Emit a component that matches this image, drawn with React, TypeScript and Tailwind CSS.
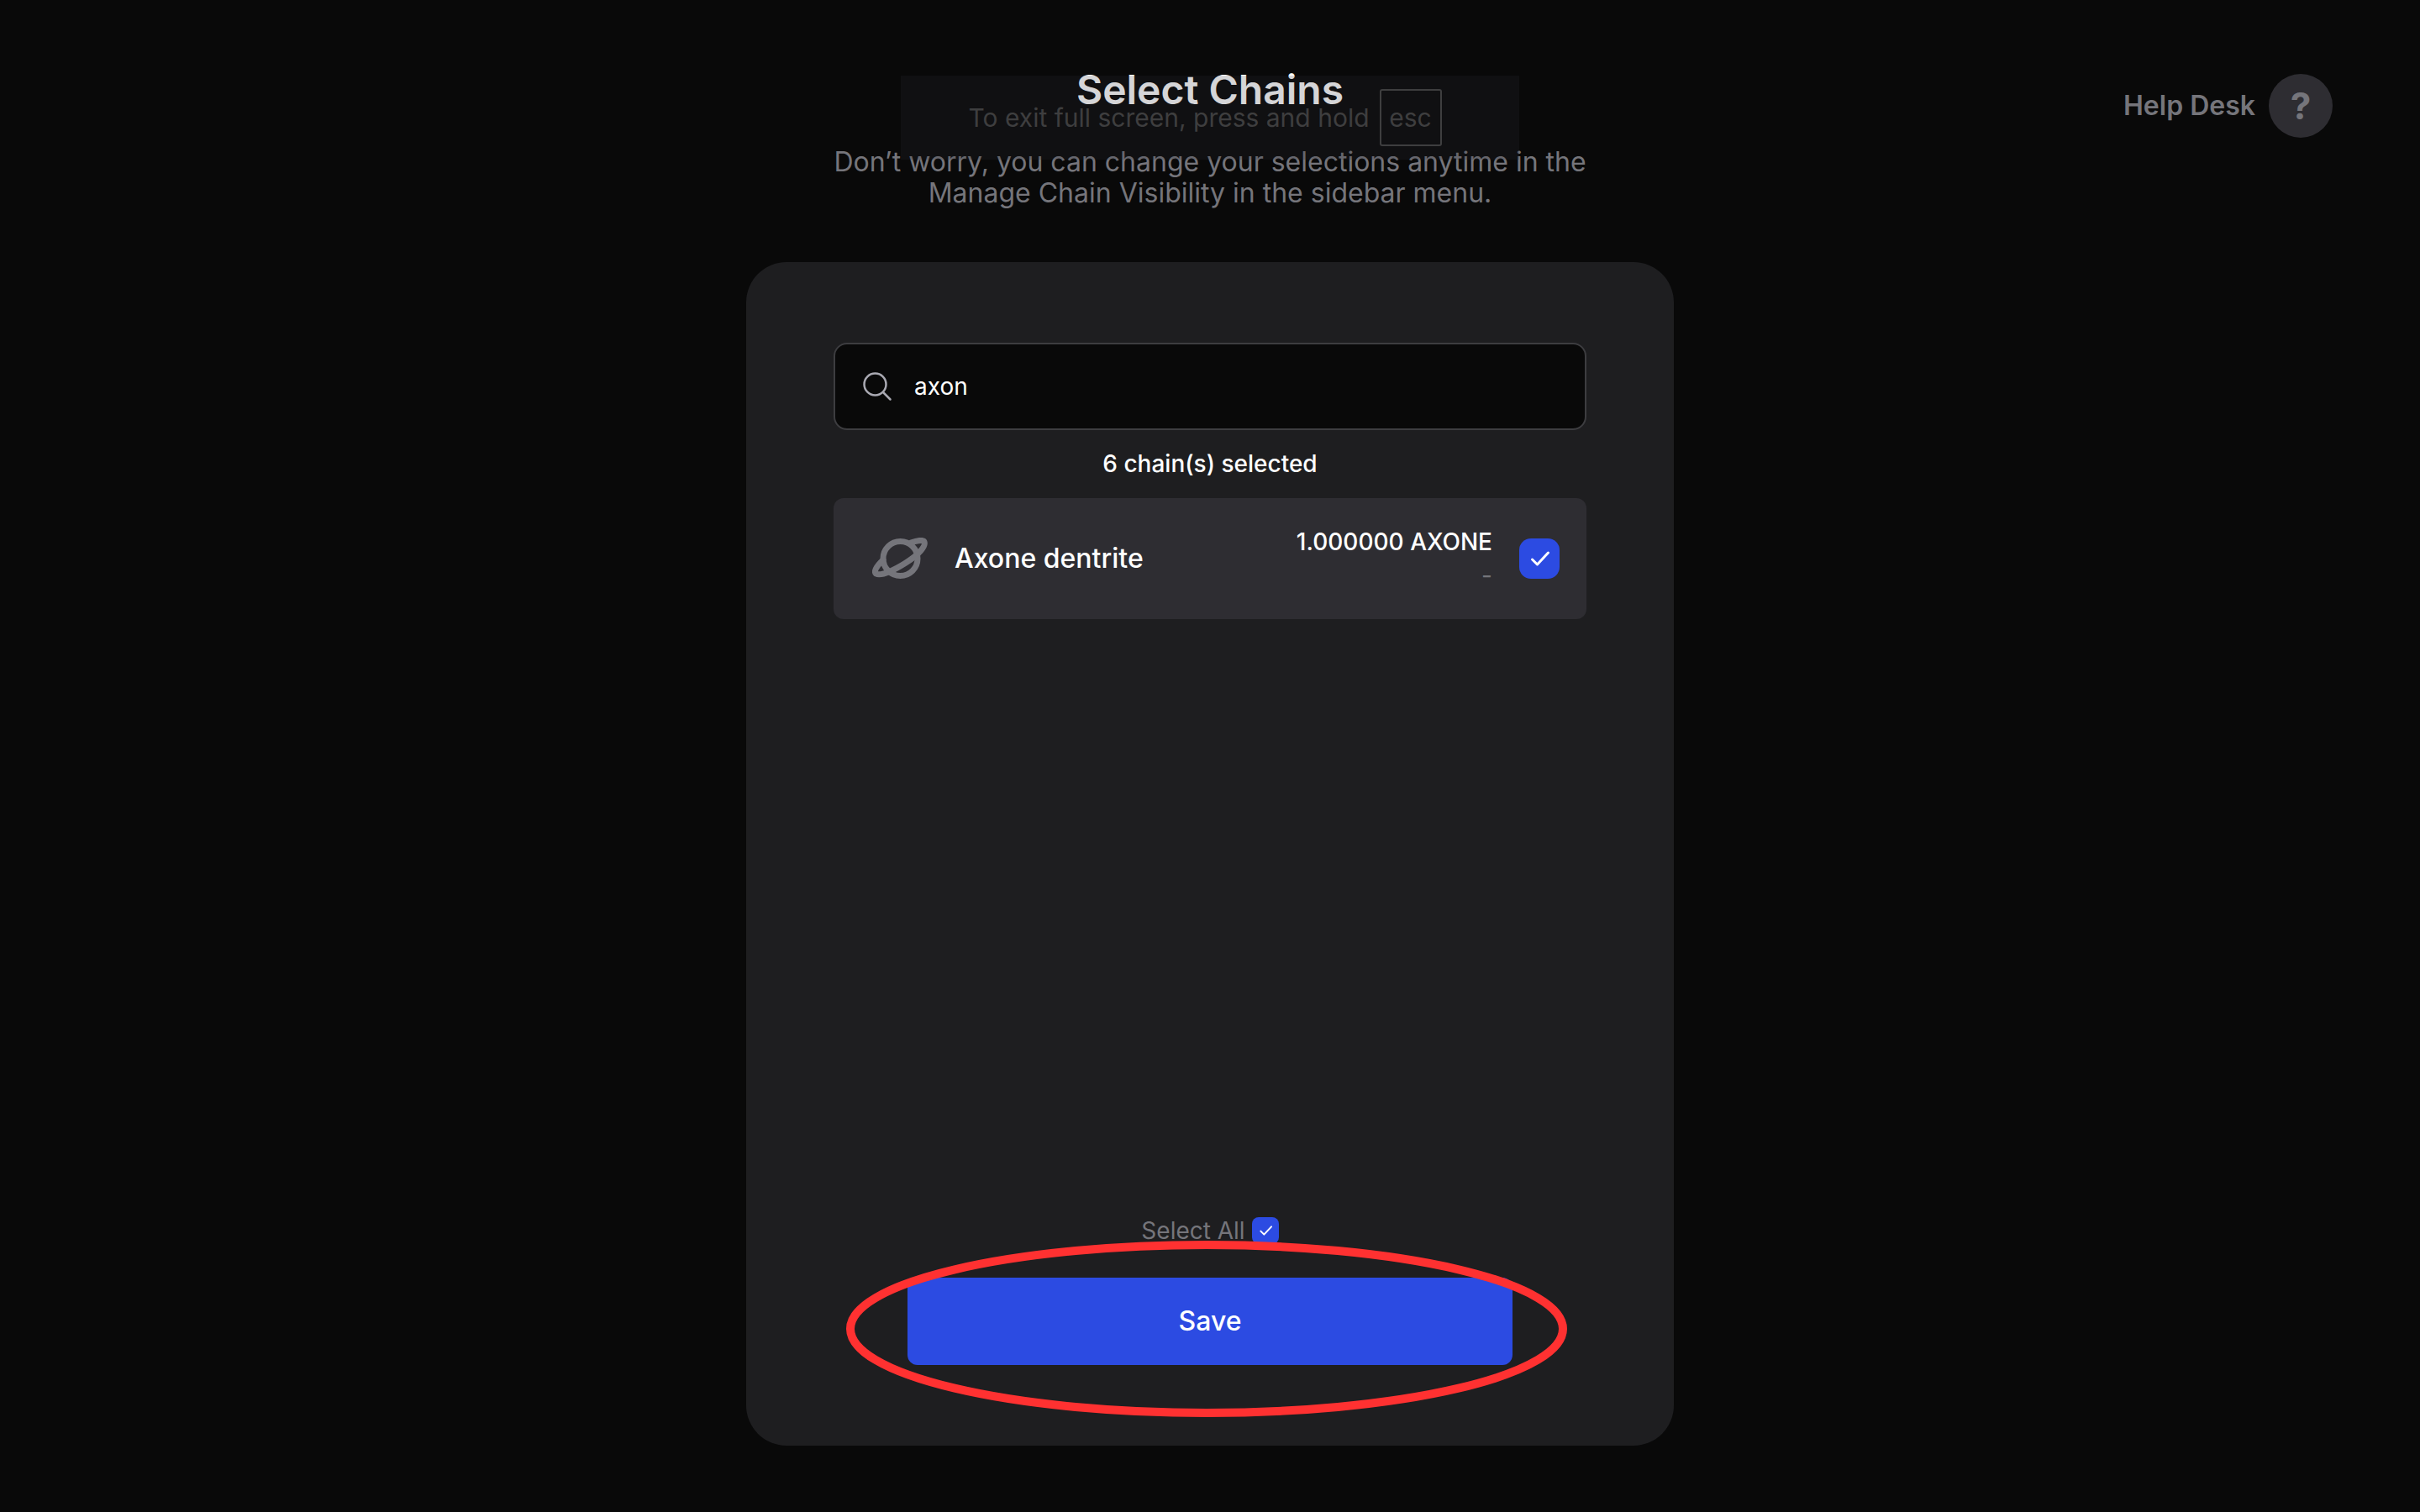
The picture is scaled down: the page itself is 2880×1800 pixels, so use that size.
import React, { useState } from "react";

function Check({ className }: { className: string }) {
  return (
    <svg viewBox="0 0 48 48" fill="none" aria-hidden="true" className={className}>
      <path d="M15.5 25L21.5 31L34.5 17" stroke="#ffffff" strokeWidth="3" strokeLinecap="round" strokeLinejoin="round" />
    </svg>
  );
}

function Planet() {
  return (
    <svg viewBox="0 0 66 50" fill="none" aria-hidden="true" className="h-[50px] w-[66px] shrink-0">
      <g stroke="#75757b" strokeWidth="7" strokeLinejoin="round" strokeLinecap="round">
        <circle cx="33.5" cy="25" r="20.5" />
        <path d="M46 6C56 2.5 61 3 62 5C64 10 56 20 40 30C25 39.5 10 46 4.5 43C1.5 40.5 5 34 13 26.5" />
      </g>
    </svg>
  );
}

export default function App() {
  const [query, setQuery] = useState("axon");
  const [chain, setChain] = useState(true);
  const [all, setAll] = useState(true);

  return (
    <div className="relative flex min-h-screen flex-col items-center bg-[#090909] pb-20 font-['Inter',sans-serif] text-white">
      <a href="#help" className="absolute top-[88px] right-[104px] flex items-center gap-4 text-[32px] font-semibold text-[#75757b]">
        Help Desk
        <span className="flex size-[76px] items-center justify-center rounded-full bg-[#2e2d32] text-[44px] font-bold">?</span>
      </a>

      <header className="flex flex-col items-center pt-20 text-center">
        <h1 className="text-[48px] leading-[54px] font-semibold">Select Chains</h1>
        <p className="mt-10 w-[920px] max-w-full text-[32px] leading-[37px] text-[#75757b]">
          Don’t worry, you can change your selections anytime in the Manage Chain Visibility in the sidebar menu.
        </p>
      </header>

      <div className="absolute top-[90px] left-1/2 flex h-[100px] w-[736px] -translate-x-1/2 items-center justify-center gap-3 bg-[#2d2d3633] pr-3 text-[30px] text-[#3e3e3f]">
        <span>To exit full screen, press and hold</span>
        <kbd className="flex h-[68px] w-[74px] items-center justify-center rounded-[3px] border-2 border-[#3e3e3f] font-['Inter',sans-serif]">esc</kbd>
      </div>

      <main className="mt-[64px] flex min-h-[1409px] w-[1104px] max-w-full flex-col rounded-[48px] bg-[#1e1e20] px-[104px] py-24">
        <label className="flex h-[104px] items-center gap-[26px] rounded-2xl border-2 border-[#3d3d40] bg-[#090909] px-8">
          <svg viewBox="0 0 36 36" fill="none" aria-hidden="true" className="size-9 shrink-0">
            <circle cx="15.5" cy="15.5" r="13" stroke="#a9a9b2" strokeWidth="2.5" />
            <path d="M25 25L33.5 33.5" stroke="#a9a9b2" strokeWidth="2.5" strokeLinecap="round" />
          </svg>
          <input
            type="text"
            aria-label="Search chains"
            value={query}
            onChange={(e) => setQuery(e.target.value)}
            className="min-w-0 flex-1 bg-transparent text-[28px] text-white outline-none"
          />
        </label>

        <p className="mt-6 text-center text-[28px] leading-8 font-medium">6 chain(s) selected</p>

        <label className="mt-[25px] flex h-36 items-center rounded-xl bg-[#2e2d32] pr-8 pl-[46px]">
          <Planet />
          <span className="ml-8 text-[32px] font-medium">Axone dentrite</span>
          <span className="ml-auto flex flex-col items-end">
            <span className="text-[28px] leading-10 font-medium">1.000000 AXONE</span>
            <span className="text-[28px] leading-10 text-[#75757b]">-</span>
          </span>
          <span className="relative ml-8 size-12 shrink-0">
            <input
              type="checkbox"
              checked={chain}
              onChange={(e) => setChain(e.target.checked)}
              className="block size-12 appearance-none rounded-[14px] bg-[#3d3d40] checked:bg-[#2c4be2]"
            />
            {chain && <Check className="pointer-events-none absolute inset-0 size-12" />}
          </span>
        </label>

        <div className="relative mx-auto mt-auto flex w-[720px] max-w-full flex-col items-center">
          <label className="flex items-center gap-2 text-[28px] leading-8 text-[#75757b]">
            Select All
            <span className="relative size-8 shrink-0">
              <input
                type="checkbox"
                checked={all}
                onChange={(e) => setAll(e.target.checked)}
                className="block size-8 appearance-none rounded-lg bg-[#3d3d40] checked:bg-[#2c4be2]"
              />
              {all && <Check className="pointer-events-none absolute inset-0 size-8" />}
            </span>
          </label>
          <button type="button" className="mt-10 h-[104px] w-full rounded-xl bg-[#2c4be2] text-[32px] font-medium text-white">
            Save
          </button>
          <svg
            viewBox="0 0 858 210"
            fill="none"
            aria-hidden="true"
            className="pointer-events-none absolute -right-[65px] -bottom-[62px] h-[210px] w-[858px] max-w-none"
          >
            <ellipse cx="429" cy="105" rx="424" ry="100" stroke="#ff3131" strokeWidth="10" />
          </svg>
        </div>
      </main>
    </div>
  );
}
